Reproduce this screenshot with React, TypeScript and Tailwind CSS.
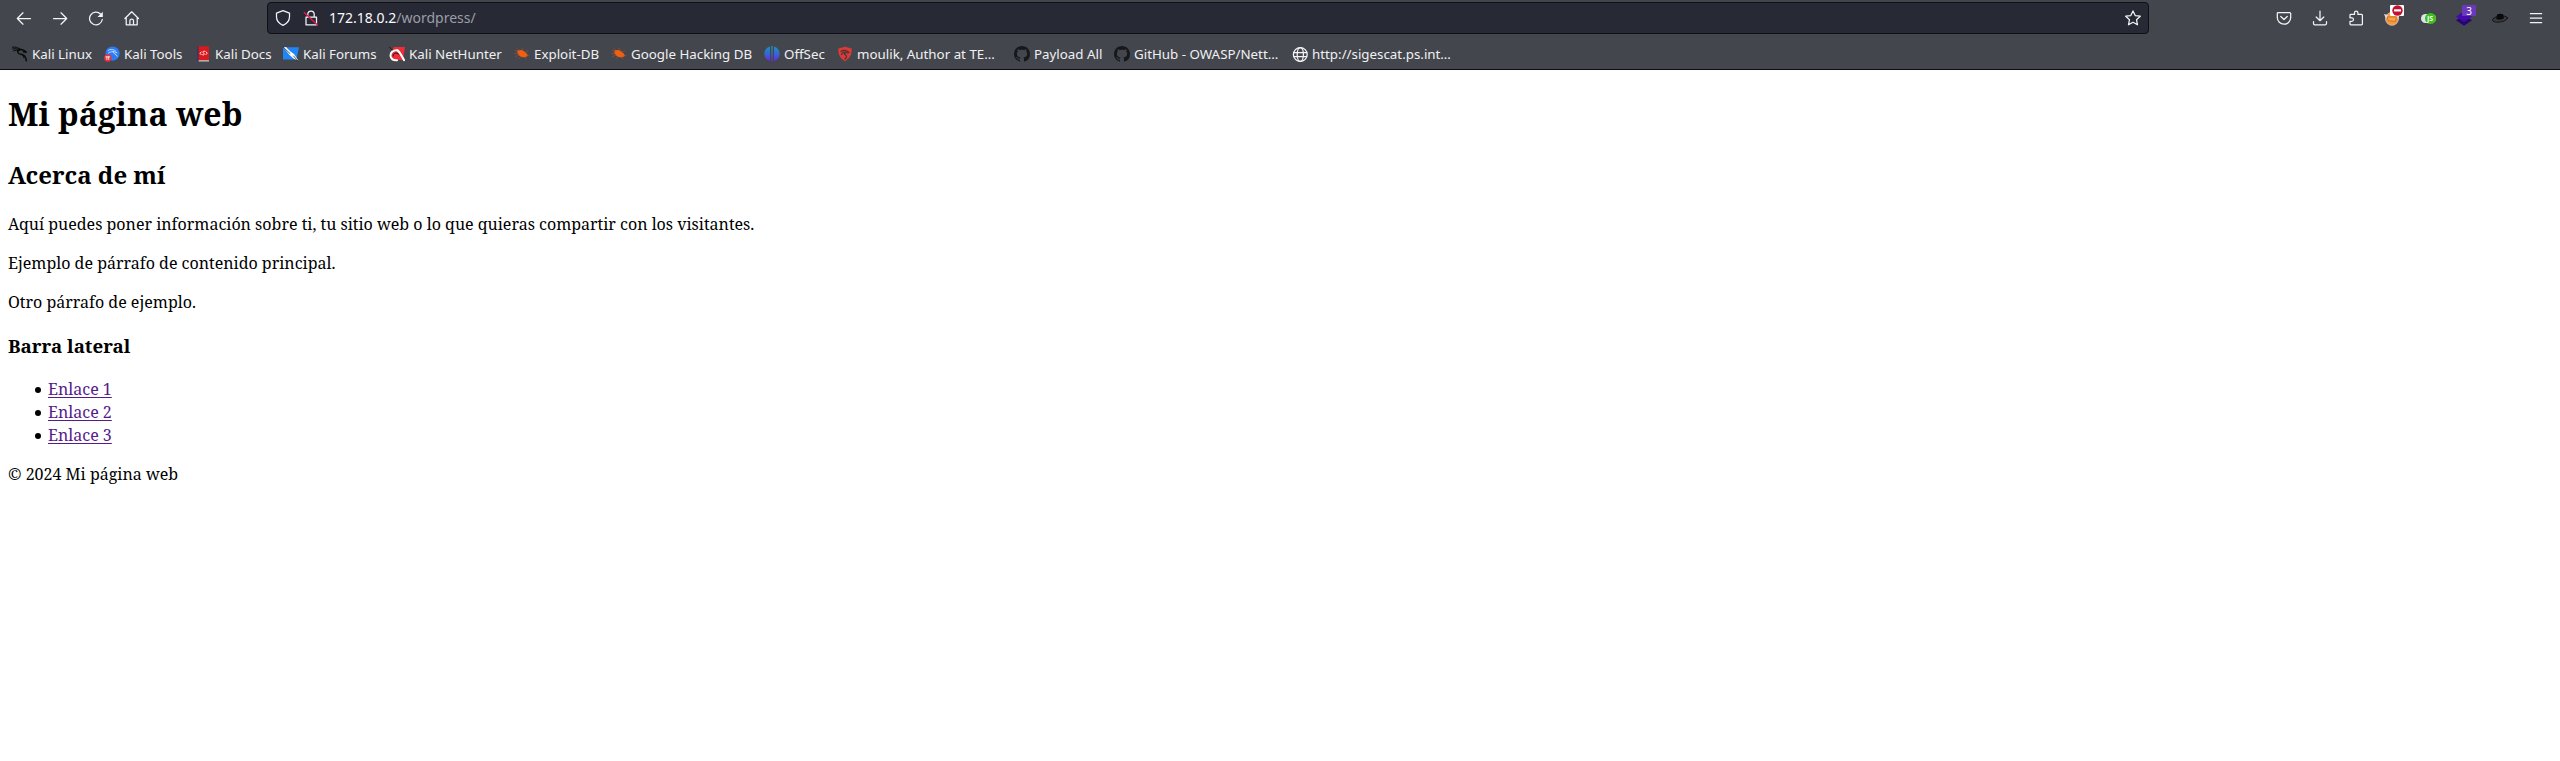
import type { ReactNode } from "react";

const Svg = ({ children }: { children: ReactNode }) => (
  <svg width="16" height="16" viewBox="0 0 16 16" fill="none" stroke="#f4f4f6" strokeWidth="1.25" strokeLinecap="round" strokeLinejoin="round" className="shrink-0">
    {children}
  </svg>
);

const Cell = ({ children }: { children: ReactNode }) => (
  <span className="relative flex h-9 w-9 items-center justify-center">{children}</span>
);

const Dragon = () => (
  <Svg>
    <g stroke="#0b0b0c" fill="none">
      <path d="M.3 1.200c3-.4 5.500.2 7.500 1.800M.6 3c2.500-.6 4.500-.4 6.500.6M1.500 5C3.500 4 5.500 4 8 4.400" strokeWidth="1" />
      <path d="M7 3.200C4.500 5.500 6 8 9 8.300c3.500.4 4.800 2 5.300 6.500" strokeWidth="1.500" />
      <path d="M7.500 3.200c3 .1 5 .9 6.800 3.100l-3-.6" strokeWidth="1.400" />
      <path d="M9.500 8.500c1.500 1 2.200 2 2.400 3.200" strokeWidth="1" />
    </g>
  </Svg>
);
const Tools = () => (
  <Svg>
    <circle cx="8.600" cy="7.600" r="7.100" fill="#2a7cf5" stroke="none" />
    <path d="M4 4.500c2.500-1.500 6-1.300 7.800.7M4.500 7c2-1.600 5.500-2 8.500-.2M9 5.500c-.5 2.500 3.500 2 4.200 4.700" stroke="#d5e6ff" strokeWidth=".9" />
    <circle cx="3.800" cy="12" r="3.700" fill="#e8323c" stroke="none" />
    <path d="M1.900 10.900h3.800M2.900 10.900v2.600M4.700 10.900v2.600" stroke="#fff" strokeWidth=".8" />
  </Svg>
);
const Docs = () => (
  <Svg>
    <path d="M2 .3h12v14H2z" fill="#d91a1c" stroke="none" />
    <path d="M2 .3h1.600v15.200H2z" fill="#3a3566" stroke="none" />
    <path d="M3.600 14.200H14v1.300H3.600z" fill="#c9c4c6" stroke="none" />
    <path d="M6.200 6L5 7.300l1.200 1.400M11 5.800l1.200 1.400L11 8.500M9.800 5.300c-1.800-.6-2.400.8-1.200 1.800 1.300 1 .7 2.200-1 1.700" stroke="#fff" strokeWidth=".9" />
  </Svg>
);
const Forums = () => (
  <Svg>
    <path d="M0 1.200h16l-2.500 12.300H0z" fill="#1e86f7" stroke="none" />
    <path d="M.5 1.500L3 1l4.500 4.500L11 8l4.600 6.800-5.100-2.300L6.500 9z" fill="#fff" stroke="none" />
    <path d="M0 1l7 6.500M10.500 10l4.500 5" stroke="#26272b" strokeWidth=".8" />
  </Svg>
);
const NetHunter = () => (
  <Svg>
    <path d="M4.500 1H16l-2 13H2z" fill="#ee2b36" stroke="none" />
    <path d="M8.500 4.300C4.500 3.800.8 6.300 1.700 10.500c.8 3 3.500 4 6.300 3.700" stroke="#fff" strokeWidth="2" />
    <path d="M8.500 4.500c2 1 3 3.500 6.500 9.500" stroke="#fff" strokeWidth="2.200" />
    <path d="M.3 1l3 3M10 8.500C7.500 5.800 4 7 4.200 10" stroke="#19191b" strokeWidth="1" />
  </Svg>
);
const Bug = () => (
  <Svg>
    <path d="M3 5C6 2.500 11.500 4.500 14 9.500 12 12.500 4.500 12.500 3 5z" fill="#f0600f" stroke="none" />
    <path d="M4 5.500L1.300 4.500M5 4.500L3 2.500M9 5L8 2.500M11 6.500l2.500-1.500M13 9.500l2 .2M11 11l1 2M5 9L1.500 10.500M7 10.500L5 12.500M3.500 7.500H.8" stroke="#a8532f" strokeWidth=".6" />
  </Svg>
);
const OffSec = () => (
  <svg width="16" height="16" viewBox="0 0 16 16" className="shrink-0">
    <defs>
      <linearGradient id="offsec" x1="0" y1="0" x2="0" y2="1">
        <stop stopColor="#1497b5" />
        <stop offset=".5" stopColor="#3568cf" />
        <stop offset="1" stopColor="#6a24dc" />
      </linearGradient>
    </defs>
    <path d="M6 .4v14.600C2.700 14.200.3 11.200.3 7.700S2.700 1.200 6 .4zM10 .4v14.600c3.300-.8 5.700-3.800 5.700-7.300S13.300 1.200 10 .4zM7.300 0h1.400v15.500H7.300z" fill="url(#offsec)" />
  </svg>
);
const Shield = () => (
  <Svg>
    <path d="M1.300 2.500L8 .8l6.700 1.700c.2 6-1.700 9.800-6.700 12.700C3 12.300 1 8.500 1.300 2.500z" fill="#dc3a35" stroke="none" />
    <path d="M4 5.500c2-1.500 5-1.500 8 1L9.500 7c-2-.8-3 .5-1.500 1.500 2 1.300 2 3 0 4.500M4.500 8.500c.5-1.500 1.500-2.300 3-2.500" stroke="#40343b" strokeWidth="1.200" />
  </Svg>
);
const GitHub = () => (
  <svg width="16" height="16" viewBox="0 0 16 16" className="shrink-0" fill="#17181b">
    <path d="M8 0C3.580 0 0 3.580 0 8c0 3.540 2.290 6.530 5.470 7.590.4.070.55-.17.55-.38 0-.19-.01-.82-.01-1.490-2.010.37-2.530-.49-2.690-.94-.09-.23-.48-.94-.82-1.130-.28-.15-.68-.52-.01-.53.63-.01 1.080.58 1.230.82.72 1.210 1.870.87 2.330.66.070-.52.28-.87.51-1.070-1.780-.2-3.640-.89-3.640-3.950 0-.87.31-1.590.82-2.150-.08-.2-.36-1.020.08-2.120 0 0 .67-.21 2.200.82.64-.18 1.320-.27 2-.27s1.360.09 2 .27c1.530-1.040 2.200-.82 2.200-.82.44 1.100.16 1.920.08 2.120.51.56.82 1.270.82 2.150 0 3.070-1.870 3.750-3.650 3.950.29.25.54.73.54 1.480 0 1.070-.01 1.930-.01 2.200 0 .21.15.46.55.38A8.010 8.010 0 0 0 16 8c0-4.420-3.580-8-8-8z" />
  </svg>
);
const Globe = () => (
  <Svg>
    <circle cx="8.300" cy="8.500" r="6.900" strokeWidth="1.300" />
    <ellipse cx="8.300" cy="8.500" rx="3.100" ry="6.900" />
    <path d="M2 6.500h12.600M2 10.500h12.600" />
  </Svg>
);

const bookmarks: { w: string; label: string; icon: ReactNode }[] = [
  { w: "w-[92px]", label: "Kali Linux", icon: <Dragon /> },
  { w: "w-[91px]", label: "Kali Tools", icon: <Tools /> },
  { w: "w-[88px]", label: "Kali Docs", icon: <Docs /> },
  { w: "w-[106px]", label: "Kali Forums", icon: <Forums /> },
  { w: "w-[125px]", label: "Kali NetHunter", icon: <NetHunter /> },
  { w: "w-[97px]", label: "Exploit-DB", icon: <Bug /> },
  { w: "w-[153px]", label: "Google Hacking DB", icon: <Bug /> },
  { w: "w-[73px]", label: "OffSec", icon: <OffSec /> },
  { w: "w-[177px]", label: "moulik, Author at TE…", icon: <Shield /> },
  { w: "w-[100px]", label: "Payload All", icon: <GitHub /> },
  { w: "w-[178px]", label: "GitHub - OWASP/Nett…", icon: <GitHub /> },
  { w: "w-[170px]", label: "http://sigescat.ps.int…", icon: <Globe /> },
];

export default function App() {
  return (
    <div className="h-[761px] w-[2560px] overflow-hidden bg-white">
      <header className="flex h-[70px] flex-col border-b border-[#0c0c10] bg-[#44464d] font-['Noto_Sans',sans-serif] text-[#f0f0f2]">
        <div className="flex h-9 items-center px-1.5">
          <Cell><Svg><path d="M14.500 8.500h-13M7 2.800L1.300 8.500 7 14.200" /></Svg></Cell>
          <Cell><Svg><path d="M1.500 8.500h13M9 2.800l5.700 5.700L9 14.200" /></Svg></Cell>
          <Cell><Svg><path d="M14.300 9.500A6.400 6.400 0 1 1 12.500 4" /><path d="M14.800 1.800v5.200H9.500z" fill="#f4f4f6" stroke="none" /></Svg></Cell>
          <Cell><Svg><path d="M.9 8.500L7.700 1.800l6.800 6.700M2.200 7.500v7.300h11V7.500M5.900 14.500v-3.700a1.800 1.800 0 0 1 3.600 0v3.700" /></Svg></Cell>
          <div className="ml-[117px] flex h-8 w-[1882px] items-center rounded border border-[#0f0f14] bg-[#272935] px-[7px]">
            <Svg><path d="M8 .7l6.500 2.400v3.700c0 4-2.300 6.800-6.500 8.600C3.800 13.600 1.500 10.800 1.500 6.800V3.100z" /></Svg>
            <span className="ml-3 flex">
              <Svg>
                <path d="M4.800 7V4.200a3.200 3.200 0 0 1 6.400 0V7M3 7h10.500v7.800H3z" />
                <path d="M1.200 2.500l13.300 12.500" stroke="#e6184b" strokeWidth="1.300" />
              </Svg>
            </span>
            <span className="ml-[10px] whitespace-nowrap text-[14px] leading-5 text-[#fbfbfe]">172.18.0.2<span className="text-[#9c9da6]">/wordpress/</span></span>
            <span className="ml-auto flex"><Svg><path d="M8 .9l2.200 4.700 5.100.6-3.800 3.500 1 5.100L8 12.300l-4.500 2.500 1-5.100L.7 6.200l5.100-.6z" /></Svg></span>
          </div>
          <div className="ml-auto flex">
            <Cell><Svg><path d="M2.300 2.500h11.400a1 1 0 0 1 1 1v4a6.700 6.700 0 0 1-13.400 0v-4a1 1 0 0 1 1-1zM4.800 6.500L8 9.500l3.200-3" /></Svg></Cell>
            <Cell><Svg><path d="M8 1v9.500M4.200 7L8 10.700 11.800 7M1.500 11.500v2a1.300 1.300 0 0 0 1.300 1.300h10.400a1.300 1.300 0 0 0 1.300-1.300v-2" /></Svg></Cell>
            <Cell><Svg><path d="M2 7.800V5.200a.8.8 0 0 1 .8-.8h3.700V2.700a1.700 1.700 0 0 1 3.400 0v1.700h3.700a.8.8 0 0 1 .8.8v8.800a.8.8 0 0 1-.8.800H2.800A.8.800 0 0 1 2 14v-2.600h1.700a1.800 1.800 0 0 0 0-3.600z" /></Svg></Cell>
            <Cell>
              <Svg>
                <circle cx="8" cy="8.800" r="6.500" fill="#f29a3d" stroke="#c9c4c2" strokeWidth=".8" />
                <path d="M0 4l4 1-2 4zM16 4l-4 1 2 4z" fill="#ddd" stroke="none" />
                <path d="M3.500 7h8.700l-.5 4.500-7-.7z" fill="#f7a548" stroke="#c96f1f" strokeWidth=".8" />
              </Svg>
              <span className="absolute left-4 top-[5px] flex h-[11px] w-[14px] items-center justify-center rounded-[1px] bg-white">
                <svg width="11" height="11" viewBox="0 0 11 11"><circle cx="5.500" cy="5.500" r="5.200" fill="#c3122f" /><path d="M2 4.300h7v2.200H2z" fill="#fff" /></svg>
              </span>
            </Cell>
            <Cell>
              <span className="flex h-[9px] w-[15px] items-center justify-end rounded-full bg-[#e2e3e4]">
                <span className="flex h-[11px] w-[11px] shrink-0 items-center justify-center rounded-full bg-[#3cc01b] text-[7px] font-bold leading-none text-white">JS</span>
              </span>
            </Cell>
            <Cell>
              <Svg>
                <path d="M0 10.200L8 5l8 5.200-8 5.600z" fill="#25066f" stroke="none" />
                <path d="M0 6.800L8 1l8 5.800L8 12z" fill="#4509ad" stroke="none" />
              </Svg>
              <span className="absolute left-4 top-[5px] flex h-[11px] w-[14px] items-center justify-center rounded-[1px] bg-[#6a38bb] text-[10px] leading-none text-white">3</span>
            </Cell>
            <Cell>
              <Svg>
                <ellipse cx="8" cy="9" rx="7.500" ry="3" transform="rotate(-9 8 9)" fill="#3a3b41" stroke="#111214" strokeWidth=".9" />
                <path d="M4.200 9L5 4.500c2-1 4.500-.8 6-.2l1 4c-2 1.500-5 2-7.800.7z" fill="#0a0a0b" stroke="none" />
              </Svg>
            </Cell>
            <Cell><Svg><path d="M2.500 3.500h11M2.500 8h11M2.500 12.500h11" strokeLinecap="square" /></Svg></Cell>
          </div>
        </div>
        <nav className="flex h-[33px] items-center pl-3 pt-[3px]">
          {bookmarks.map((b) => (
            <a key={b.label} className={"flex shrink-0 items-center gap-1 whitespace-nowrap text-[13.333px] leading-5 " + b.w}>
              {b.icon}
              <span>{b.label}</span>
            </a>
          ))}
        </nav>
      </header>
      <main className="flex flex-col items-start pl-2 pt-[22px] font-['Noto_Serif','DejaVu_Serif',serif] text-base leading-[23px] text-black">
        <h1 className="text-[32px] font-bold leading-[44px]">Mi página web</h1>
        <h2 className="mt-[22px] text-2xl font-bold leading-[33px]">Acerca de mí</h2>
        <p className="mt-[22px]">Aquí puedes poner información sobre ti, tu sitio web o lo que quieras compartir con los visitantes.</p>
        <p className="mt-4">Ejemplo de párrafo de contenido principal.</p>
        <p className="mt-4">Otro párrafo de ejemplo.</p>
        <h3 className="mt-[19px] text-[18.720px] font-bold leading-[26px]">Barra lateral</h3>
        <ul className="mt-[19px] pl-[26.500px]">
          {["Enlace 1", "Enlace 2", "Enlace 3"].map((label) => (
            <li key={label} className="flex items-center gap-[7.500px]">
              <span className="mt-px h-[6px] w-[6px] rounded-full bg-black" />
              <a className="text-[#551a8b] underline decoration-1 underline-offset-2">{label}</a>
            </li>
          ))}
        </ul>
        <p className="mt-4">© 2024 Mi página web</p>
      </main>
    </div>
  );
}
